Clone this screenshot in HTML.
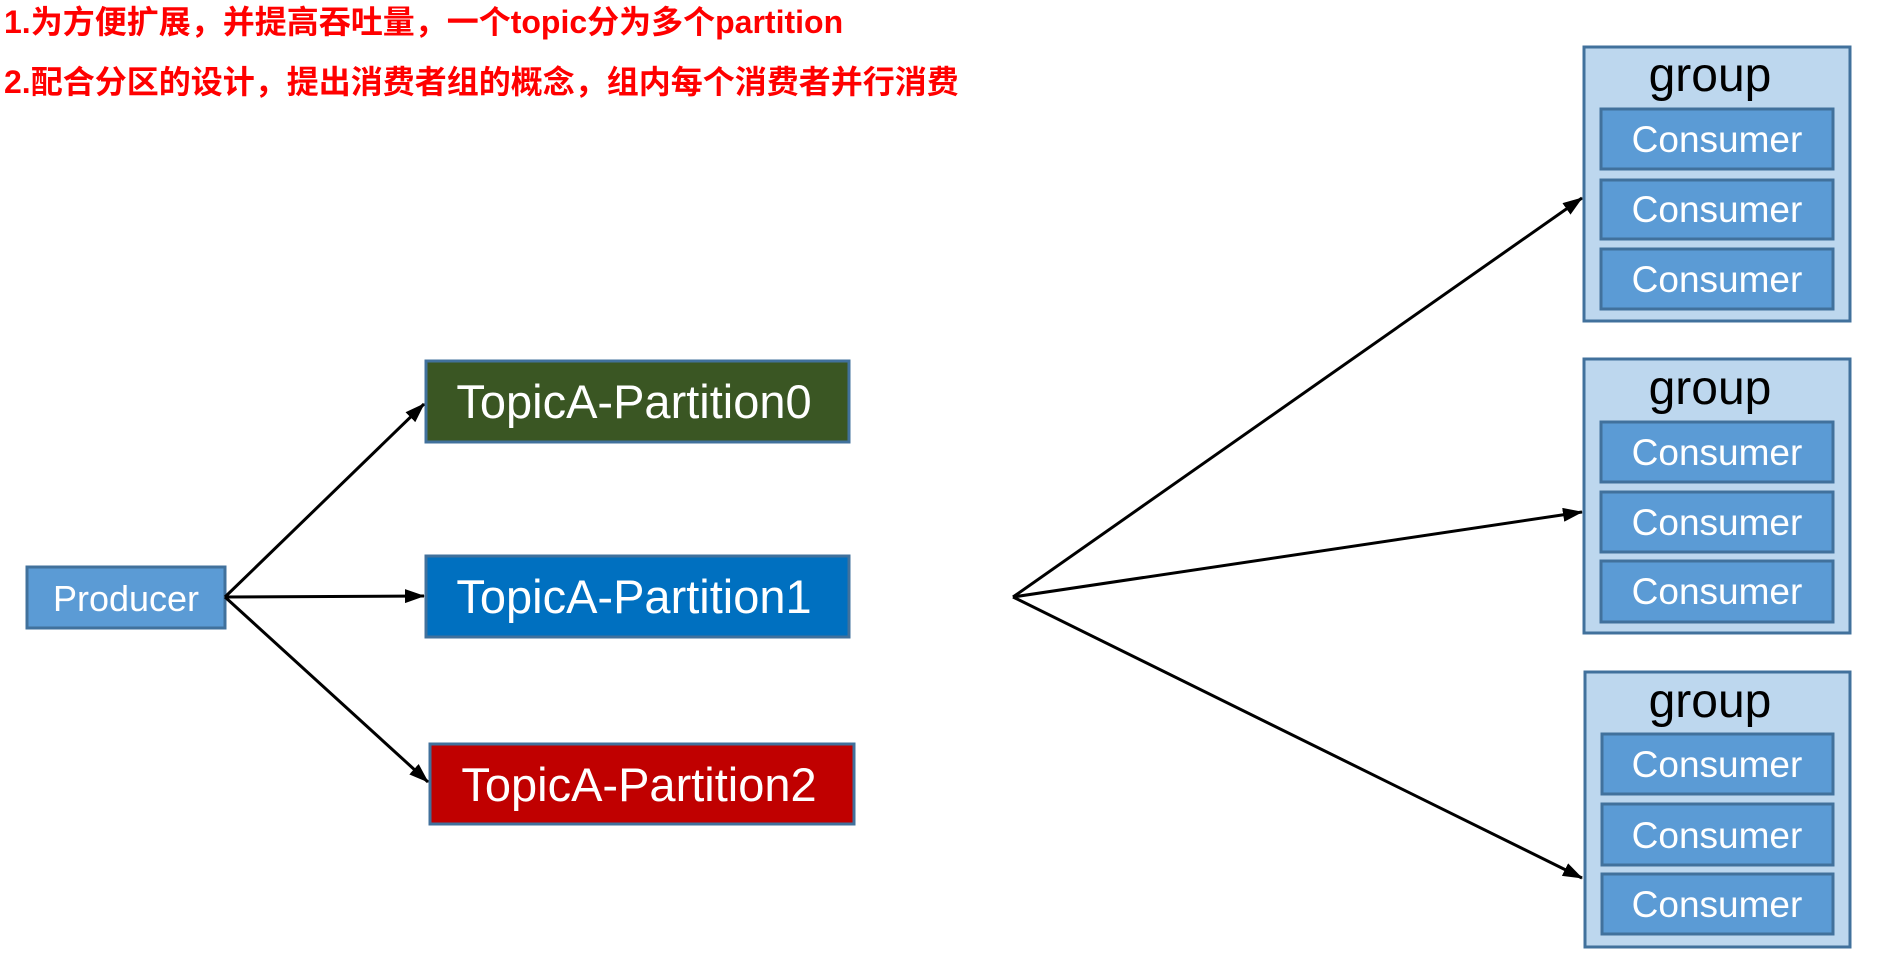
<!DOCTYPE html>
<html><head><meta charset="utf-8"><style>
html,body{margin:0;padding:0;background:#fff;width:1882px;height:958px;overflow:hidden}
svg{display:block}
</style></head><body>
<svg width="1882" height="958" viewBox="0 0 1882 958" xmlns="http://www.w3.org/2000/svg">
<defs>
<marker id="ah2" markerWidth="20" markerHeight="14" refX="19" refY="7" orient="auto" markerUnits="userSpaceOnUse">
<path d="M0,0 L20,7 L0,14 z" fill="#000"/>
</marker>
</defs>
<g font-family="'Liberation Sans','Noto Sans CJK SC',sans-serif" font-weight="bold" font-size="32" fill="#ff0000">
<text x="4" y="33">1.为方便扩展，并提高吞吐量，一个topic分为多个partition</text>
<text x="4" y="93">2.配合分区的设计，提出消费者组的概念，组内每个消费者并行消费</text>
</g>
<g font-family="'Liberation Sans',sans-serif" text-anchor="middle">
<rect x="27" y="567" width="198" height="61" fill="#5b9bd5" stroke="#41719c" stroke-width="3"/>
<text x="126" y="611" font-size="36" fill="#fff">Producer</text>
<rect x="426" y="361" width="423" height="81" fill="#3a5623" stroke="#41719c" stroke-width="3"/>
<text x="634" y="418" font-size="47" fill="#fff">TopicA-Partition0</text>
<rect x="426" y="556" width="423" height="81" fill="#0070c0" stroke="#41719c" stroke-width="3"/>
<text x="634" y="613" font-size="47" fill="#fff">TopicA-Partition1</text>
<rect x="430" y="744" width="424" height="80" fill="#c00000" stroke="#41719c" stroke-width="3"/>
<text x="639" y="801" font-size="47" fill="#fff">TopicA-Partition2</text>

<g stroke="#000" stroke-width="3" fill="none">
<line x1="225" y1="597" x2="424" y2="404" marker-end="url(#ah2)"/>
<line x1="225" y1="597" x2="424" y2="596" marker-end="url(#ah2)"/>
<line x1="225" y1="597" x2="428" y2="782" marker-end="url(#ah2)"/>
<line x1="1013" y1="597" x2="1582" y2="198" marker-end="url(#ah2)"/>
<line x1="1013" y1="597" x2="1582" y2="512" marker-end="url(#ah2)"/>
<line x1="1013" y1="597" x2="1582" y2="878" marker-end="url(#ah2)"/>
</g>

<rect x="1584" y="47" width="266" height="274" fill="#bdd7ee" stroke="#41719c" stroke-width="3"/>
<text x="1710" y="91" font-size="48" fill="#000">group</text>
<rect x="1601" y="109" width="232" height="60" fill="#5b9bd5" stroke="#41719c" stroke-width="3"/>
<text x="1717" y="152" font-size="37" fill="#fff">Consumer</text>
<rect x="1601" y="180" width="232" height="59" fill="#5b9bd5" stroke="#41719c" stroke-width="3"/>
<text x="1717" y="222" font-size="37" fill="#fff">Consumer</text>
<rect x="1601" y="249" width="232" height="60" fill="#5b9bd5" stroke="#41719c" stroke-width="3"/>
<text x="1717" y="292" font-size="37" fill="#fff">Consumer</text>

<rect x="1584" y="359" width="266" height="274" fill="#bdd7ee" stroke="#41719c" stroke-width="3"/>
<text x="1710" y="404" font-size="48" fill="#000">group</text>
<rect x="1601" y="422" width="232" height="60" fill="#5b9bd5" stroke="#41719c" stroke-width="3"/>
<text x="1717" y="465" font-size="37" fill="#fff">Consumer</text>
<rect x="1601" y="492" width="232" height="60" fill="#5b9bd5" stroke="#41719c" stroke-width="3"/>
<text x="1717" y="535" font-size="37" fill="#fff">Consumer</text>
<rect x="1601" y="561" width="232" height="61" fill="#5b9bd5" stroke="#41719c" stroke-width="3"/>
<text x="1717" y="604" font-size="37" fill="#fff">Consumer</text>

<rect x="1585" y="672" width="265" height="275" fill="#bdd7ee" stroke="#41719c" stroke-width="3"/>
<text x="1710" y="717" font-size="48" fill="#000">group</text>
<rect x="1602" y="734" width="231" height="60" fill="#5b9bd5" stroke="#41719c" stroke-width="3"/>
<text x="1717" y="777" font-size="37" fill="#fff">Consumer</text>
<rect x="1602" y="804" width="231" height="61" fill="#5b9bd5" stroke="#41719c" stroke-width="3"/>
<text x="1717" y="848" font-size="37" fill="#fff">Consumer</text>
<rect x="1602" y="874" width="231" height="60" fill="#5b9bd5" stroke="#41719c" stroke-width="3"/>
<text x="1717" y="917" font-size="37" fill="#fff">Consumer</text>
</g>
</svg>
</body></html>
